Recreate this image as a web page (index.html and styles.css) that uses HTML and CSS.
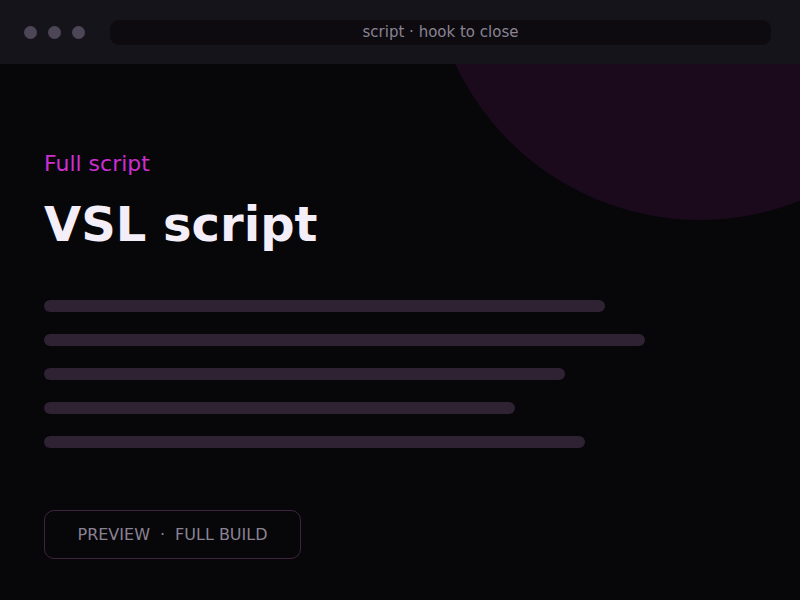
FILE: index.html
```html
<!DOCTYPE html>
<html>
<head>
<meta charset="utf-8">
<link rel="stylesheet" href="styles.css">
</head>
<body>
<div class="window">
  <div class="topbar">
    <div class="dots"><span class="dot"></span><span class="dot"></span><span class="dot"></span></div>
    <div class="address">script · hook to close</div>
  </div>
  <div class="content">
    <div class="glow"></div>
    <div class="eyebrow">Full script</div>
    <h1 class="title">VSL script</h1>
    <div class="lines">
      <div class="line" style="width:561px"></div>
      <div class="line" style="width:601px"></div>
      <div class="line" style="width:521px"></div>
      <div class="line" style="width:471px"></div>
      <div class="line" style="width:541px"></div>
    </div>
    <div class="button">PREVIEW<span class="sep">·</span>FULL BUILD</div>
  </div>
</div>
</body>
</html>
```

FILE: styles.css
```css
* { box-sizing: border-box; }
html, body { margin: 0; padding: 0; }
body {
  background: #070609;
  font-family: "DejaVu Sans", sans-serif;
  width: 800px;
  height: 600px;
  overflow: hidden;
}
.window { width: 800px; height: 600px; display: flex; flex-direction: column; }
.topbar {
  height: 64px;
  background: #16141b;
  display: flex;
  align-items: center;
  padding: 0 29px 0 24px;
  position: relative;
  z-index: 2;
}
.dots { display: flex; gap: 11px; }
.dot { width: 13px; height: 13px; border-radius: 50%; background: #4d4656; display: block; }
.address {
  margin-left: 25px;
  flex: 1;
  height: 25px;
  border-radius: 9px;
  background: #0d0b10;
  color: #8a8393;
  font-size: 15px;
  line-height: 25px;
  text-align: center;
}
.content {
  flex: 1;
  position: relative;
  overflow: hidden;
  padding: 86px 44px 0 44px;
}
.glow {
  position: absolute;
  top: -384px;
  right: -170px;
  width: 540px;
  height: 540px;
  border-radius: 50%;
  background: #1a0a1c;
}
.eyebrow {
  position: relative;
  font-size: 22px;
  line-height: 28px;
  color: #cc2ed2;
}
.title {
  position: relative;
  margin: 18px 0 0 0;
  font-size: 48px;
  line-height: 56px;
  font-weight: bold;
  color: #f4eef8;
}
.lines {
  position: relative;
  margin-top: 48px;
  display: flex;
  flex-direction: column;
  gap: 22px;
}
.line { height: 12px; border-radius: 6px; background: #2e2233; }
.button {
  position: relative;
  margin-top: 62px;
  width: 257px;
  height: 49px;
  border: 1px solid #40243f;
  border-radius: 10px;
  display: flex;
  align-items: center;
  justify-content: center;
  color: #8a8393;
  font-size: 16px;
}
.sep { margin: 0 10px; }
```
